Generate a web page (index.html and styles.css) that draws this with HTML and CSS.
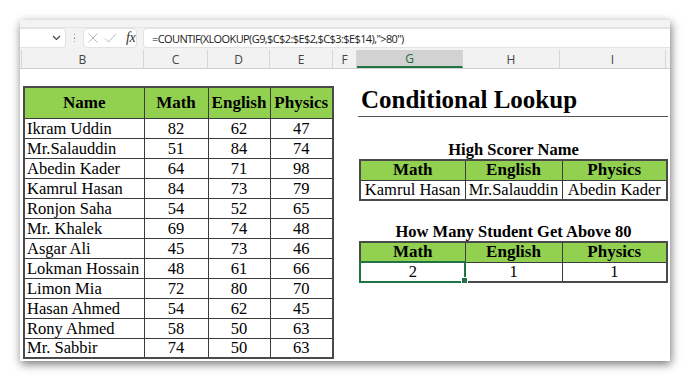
FILE: index.html
```html
<!DOCTYPE html>
<html lang="en">
<head>
<meta charset="utf-8">
<title>Conditional Lookup</title>
<link rel="stylesheet" href="styles.css">
</head>
<body>
<div class="window">
  <div class="ribbon-strip"></div>
  <div class="formula-row">
    <div class="namebox">
      <svg class="chev" width="9" height="6" viewBox="0 0 9 6"><path d="M1 1 L4.5 4.5 L8 1" fill="none" stroke="#444" stroke-width="1.2"/></svg>
    </div>
    <div class="dots"><span></span><span></span><span></span></div>
    <div class="fxbox">
      <svg width="12" height="12" viewBox="0 0 12 12"><path d="M1.5 1.5 L10.5 10.5 M10.5 1.5 L1.5 10.5" stroke="#b8b8b8" stroke-width="1"/></svg>
      <svg width="13" height="12" viewBox="0 0 13 12"><path d="M1 6.5 L4.5 10 L12 2" fill="none" stroke="#b8b8b8" stroke-width="1"/></svg>
      <span class="fx">fx</span>
    </div>
    <div class="formula">=COUNTIF(XLOOKUP(G9,$C$2:$E$2,$C$3:$E$14),"&gt;80")</div>
  </div>
  <div class="col-headers">
    <div class="gutter"></div>
    <div class="ch w-b">B</div>
    <div class="ch w-c">C</div>
    <div class="ch w-d">D</div>
    <div class="ch w-e">E</div>
    <div class="ch w-f">F</div>
    <div class="ch w-g active">G</div>
    <div class="ch w-h">H</div>
    <div class="ch w-i">I</div>
    <div class="ch rest"></div>
  </div>
  <div class="sheet">
    <table class="scores">
      <colgroup><col class="t-b"><col class="t-c"><col class="t-d"><col class="t-e"></colgroup>
      <thead>
        <tr><th>Name</th><th>Math</th><th>English</th><th>Physics</th></tr>
      </thead>
      <tbody>
        <tr><td class="name">Ikram Uddin</td><td>82</td><td>62</td><td>47</td></tr>
        <tr><td class="name">Mr.Salauddin</td><td>51</td><td>84</td><td>74</td></tr>
        <tr><td class="name">Abedin Kader</td><td>64</td><td>71</td><td>98</td></tr>
        <tr><td class="name">Kamrul Hasan</td><td>84</td><td>73</td><td>79</td></tr>
        <tr><td class="name">Ronjon Saha</td><td>54</td><td>52</td><td>65</td></tr>
        <tr><td class="name">Mr. Khalek</td><td>69</td><td>74</td><td>48</td></tr>
        <tr><td class="name">Asgar Ali</td><td>45</td><td>73</td><td>46</td></tr>
        <tr><td class="name">Lokman Hossain</td><td>48</td><td>61</td><td>66</td></tr>
        <tr><td class="name">Limon Mia</td><td>72</td><td>80</td><td>70</td></tr>
        <tr><td class="name">Hasan Ahmed</td><td>54</td><td>62</td><td>45</td></tr>
        <tr><td class="name">Rony Ahmed</td><td>58</td><td>50</td><td>63</td></tr>
        <tr><td class="name">Mr. Sabbir</td><td>74</td><td>50</td><td>63</td></tr>
      </tbody>
    </table>
    <div class="panel">
      <div class="title">Conditional Lookup</div>
      <div class="caption first">High Scorer Name</div>
      <table class="result">
        <colgroup><col class="t-g"><col class="t-h"><col class="t-i"></colgroup>
        <thead><tr><th>Math</th><th>English</th><th>Physics</th></tr></thead>
        <tbody><tr><td>Kamrul Hasan</td><td>Mr.Salauddin</td><td>Abedin Kader</td></tr></tbody>
      </table>
      <div class="caption second">How Many Student Get Above 80</div>
      <table class="result">
        <colgroup><col class="t-g"><col class="t-h"><col class="t-i"></colgroup>
        <thead><tr><th>Math</th><th>English</th><th>Physics</th></tr></thead>
        <tbody><tr><td class="sel">2</td><td>1</td><td>1</td></tr></tbody>
      </table>
    </div>
  </div>
</div>
</body>
</html>
```

FILE: styles.css
```css
* { box-sizing: border-box; }
html, body { margin: 0; padding: 0; background: #ffffff; }
body { width: 690px; height: 381px; overflow: hidden; padding: 20px 0 0 20px; }

.window {
  width: 650px;
  height: 341px;
  background: #ffffff;
  box-shadow: 1px 3px 9px rgba(0,0,0,0.55);
  overflow: hidden;
  display: flex;
  flex-direction: column;
}

.ribbon-strip {
  height: 8px;
  background: #f3f3f3;
  border-bottom: 1px solid #e4e4e4;
}

.formula-row {
  height: 22px;
  background: #f3f3f3;
  display: flex;
  align-items: stretch;
  padding: 0 0 2px 0;
}
.namebox {
  width: 46px;
  background: #fff;
  border: 1px solid #e2e2e2;
  border-left: none;
  border-radius: 0 4px 4px 0;
  display: flex;
  align-items: center;
  justify-content: flex-end;
  padding-right: 4px;
}
.dots {
  width: 17px;
  display: flex;
  flex-direction: column;
  align-items: center;
  justify-content: center;
  gap: 2px;
}
.dots span { width: 1.5px; height: 1.5px; background: #888; border-radius: 50%; }
.fxbox {
  width: 54px;
  background: #fff;
  border: 1px solid #e2e2e2;
  border-radius: 4px;
  display: flex;
  align-items: center;
  gap: 5px;
  padding-left: 3px;
}
.fx {
  font-family: "Liberation Serif", serif;
  font-style: italic;
  font-size: 14px;
  color: #333;
  margin-left: 4px;
  letter-spacing: -0.5px;
}
.formula {
  flex: 1;
  margin-left: 6px;
  background: #fff;
  border: 1px solid #e2e2e2;
  border-right: none;
  border-radius: 4px 0 0 4px;
  font-family: "Open Sans", sans-serif;
  font-size: 11px;
  letter-spacing: -0.6px;
  color: #222;
  padding-left: 8px;
  display: flex;
  align-items: center;
  white-space: nowrap;
}

.col-headers {
  height: 19px;
  display: flex;
  background: #f2f2f2;
  border-bottom: 1px solid #cfcfcf;
  font-family: "Open Sans", sans-serif;
  font-size: 12px;
  color: #444;
}
.gutter { width: 2px; border-right: 1px solid #d6d6d6; }
.ch {
  display: flex;
  align-items: center;
  justify-content: center;
  border-right: 1px solid #d6d6d6;
}
.ch.active {
  background: #d2d2d2;
  color: #1f6b43;
  border-bottom: 2px solid #217346;
}
.ch.rest { flex: 1; border-right: none; }

.w-b { width: 122px; }
.w-c { width: 64px; }
.w-d { width: 62px; }
.w-e { width: 63px; }
.w-f { width: 24px; }
.w-g { width: 106px; }
.w-h { width: 97px; }
.w-i { width: 106px; }

.t-b { width: 120px; }
.t-c { width: 64px; }
.t-d { width: 62px; }
.t-e { width: 63px; }
.t-g { width: 105px; }
.t-h { width: 97px; }
.t-i { width: 105px; }

.sheet {
  flex: 1;
  display: flex;
  align-items: flex-start;
  padding: 17px 0 0 3px;
  gap: 25px;
  font-family: "Liberation Serif", serif;
  color: #000;
}

table { border-collapse: collapse; table-layout: fixed; }

.scores { width: 309px; border: 2px solid #4a4a4a; }
.scores th, .scores td { border: 1px solid #3c3c3c; padding: 0; }
.scores th {
  height: 31px;
  background: #92d050;
  font-size: 17px;
  font-weight: bold;
  text-align: center;
  vertical-align: middle;
}
.scores td {
  height: 20px;
  font-size: 16.5px;
  line-height: 18px;
  text-align: center;
  vertical-align: bottom;
}
.scores td.name { text-align: left; padding-left: 2px; }

.panel { width: 309px; display: flex; flex-direction: column; }
.title {
  height: 31px;
  border-bottom: 1px solid #555;
  font-size: 25px;
  font-weight: bold;
  line-height: 28px;
  padding-left: 3px;
  margin-left: -1px;
}
.caption {
  font-size: 16.5px;
  font-weight: bold;
  text-align: center;
  line-height: 19px;
  height: 21px;
  display: flex;
  align-items: flex-end;
  justify-content: center;
}
.caption.first { margin-top: 21px; }
.caption.second { margin-top: 20px; height: 20px; }

.result { width: 307px; border: 2px solid #4a4a4a; }
.result th, .result td { border: 1px solid #3c3c3c; padding: 0; height: 20px; text-align: center; font-size: 17px; line-height: 18px; }
.result th { background: #92d050; font-weight: bold; vertical-align: middle; }
.result td { vertical-align: bottom; font-size: 16.5px; }

.result td.sel {
  position: relative;
  outline: 2px solid #217346;
  outline-offset: -1px;
}
.result td.sel::after {
  content: "";
  position: absolute;
  right: -3px;
  bottom: -3px;
  width: 5px;
  height: 5px;
  background: #217346;
  border: 1px solid #fff;
}
```
